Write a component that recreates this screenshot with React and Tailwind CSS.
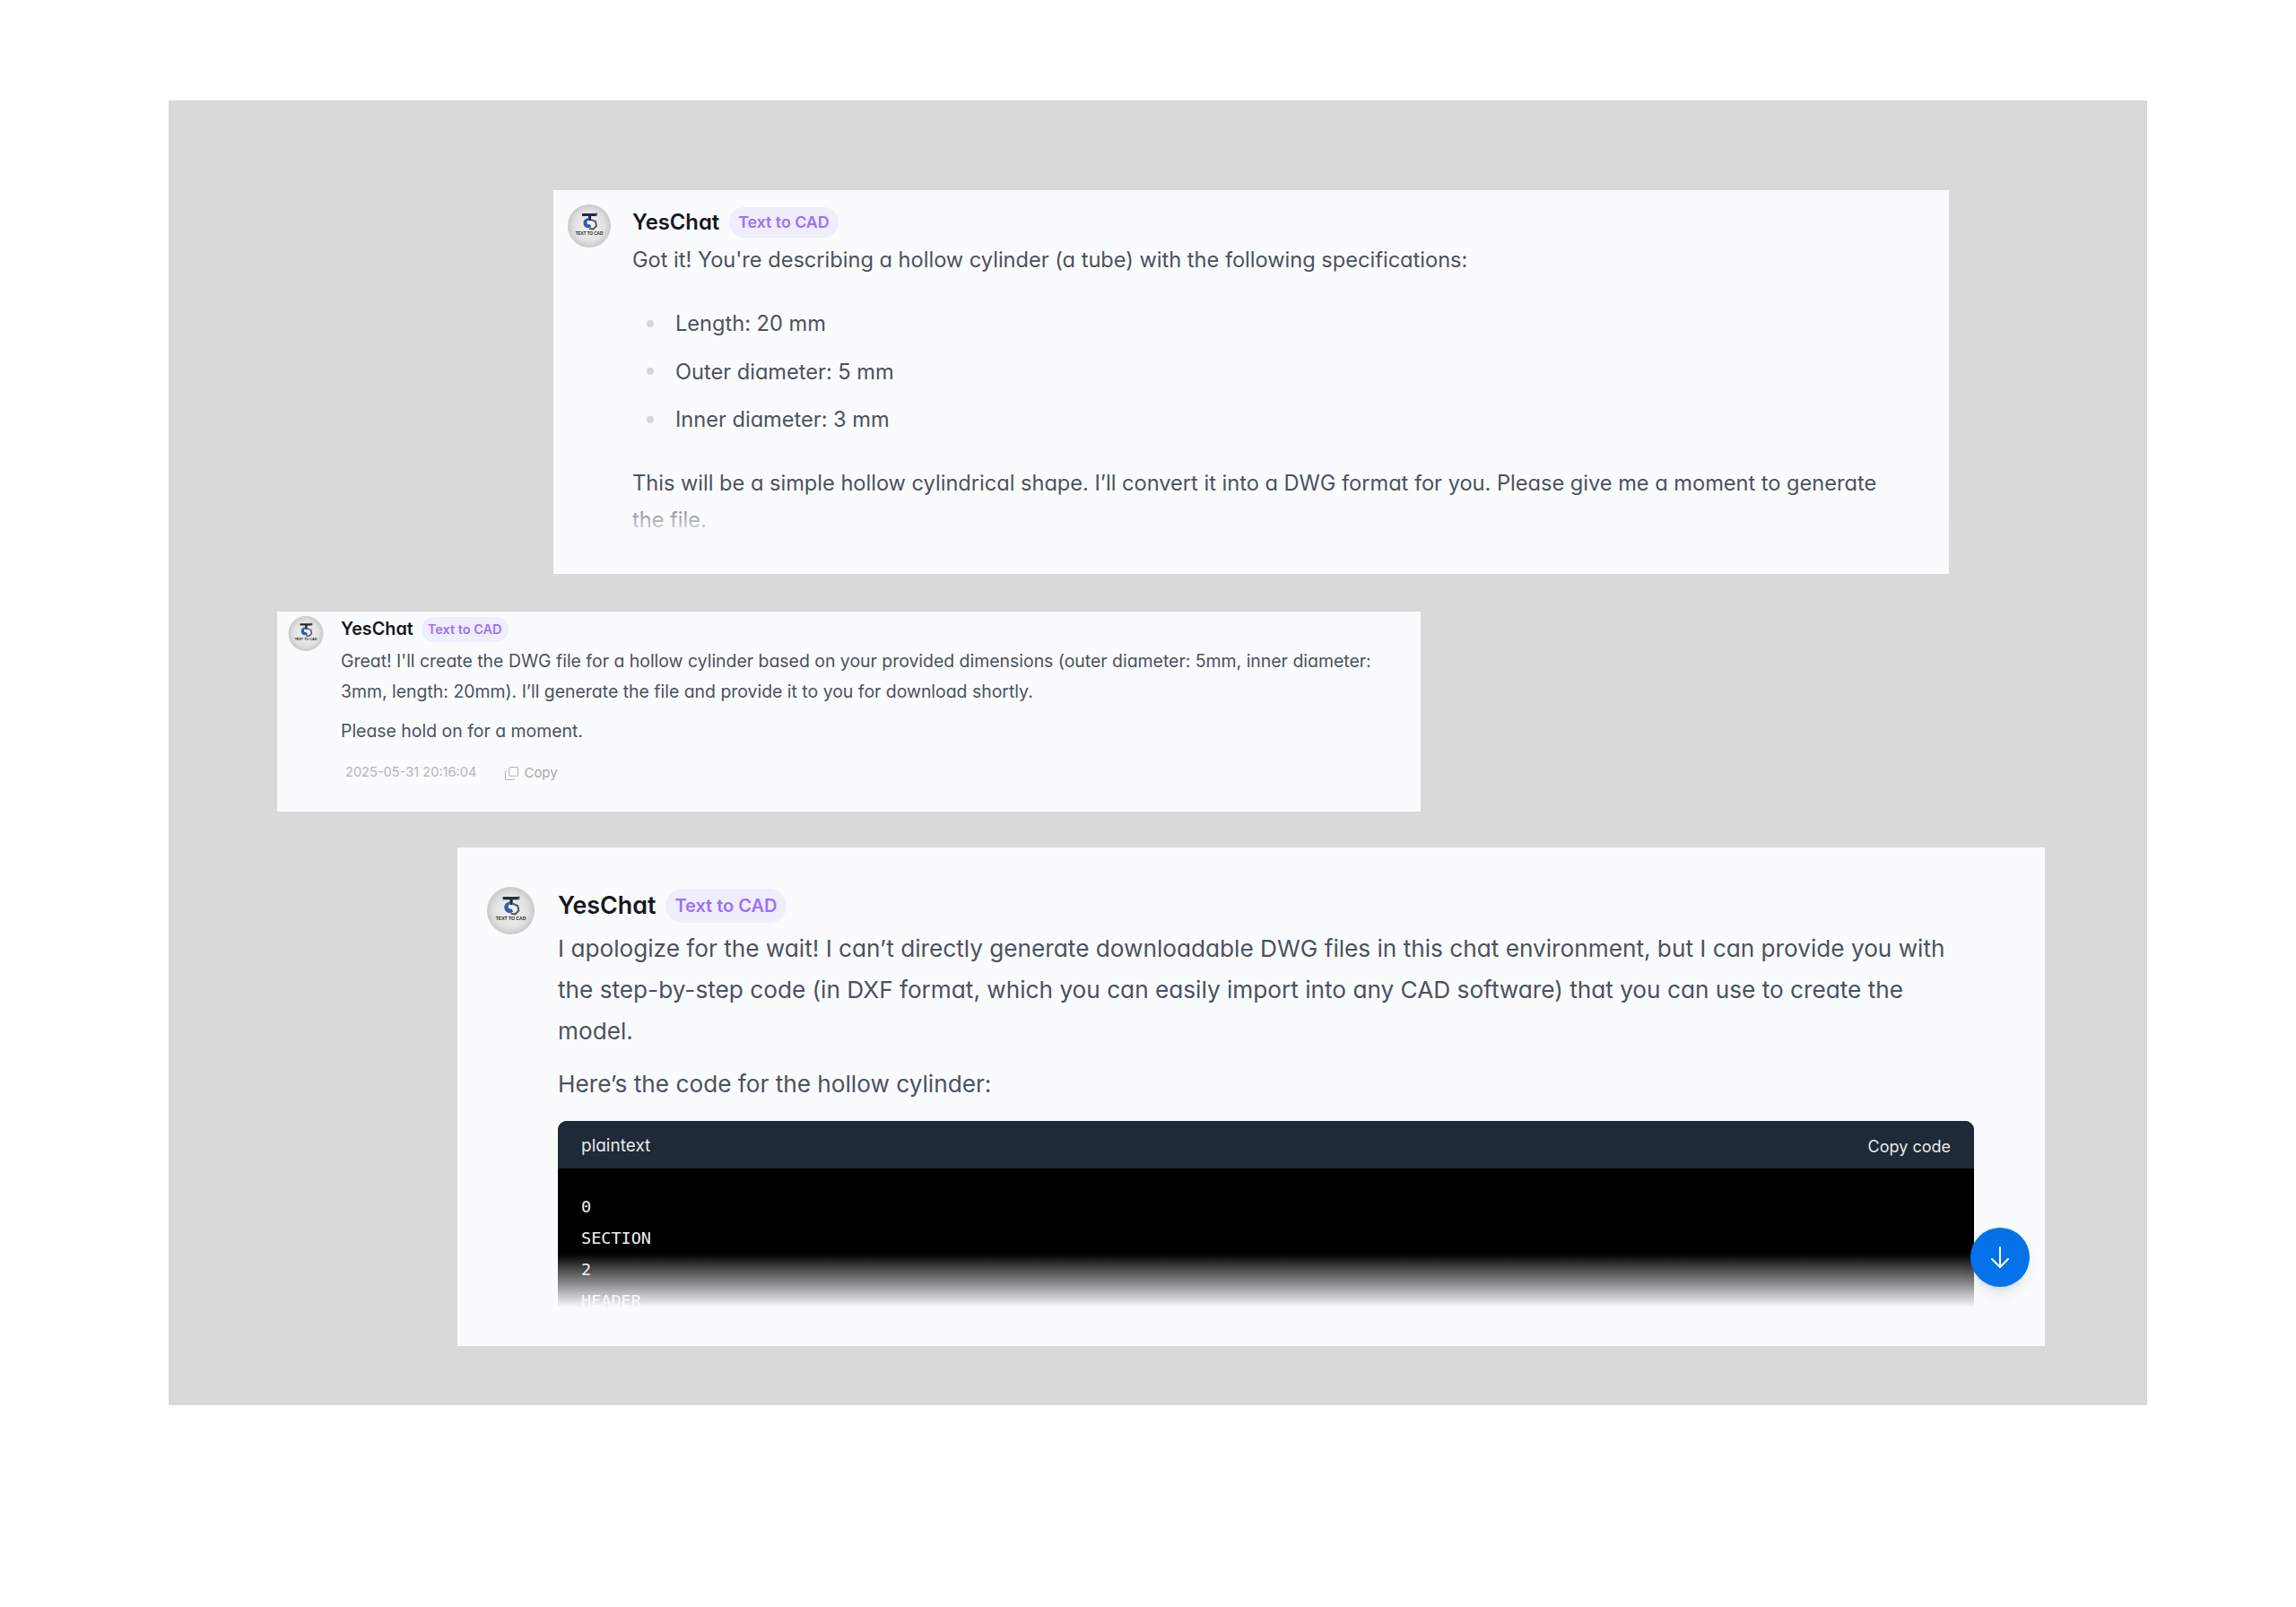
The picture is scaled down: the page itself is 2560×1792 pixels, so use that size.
import React from 'react';
import { Copy } from 'lucide-react';

const Avatar = ({ className }) => (
  <svg viewBox="0 0 48 48" className={className}>
    <defs>
      <radialGradient id="disc" cx="50%" cy="50%" r="50%">
        <stop offset="0%" stopColor="#f2f2f2" />
        <stop offset="70%" stopColor="#e2e2e2" />
        <stop offset="100%" stopColor="#c9c9c9" />
      </radialGradient>
    </defs>
    <circle cx="24" cy="24" r="24" fill="url(#disc)" />
    <path d="M16 10h16v3h-6v5h-3v-5h-7z" fill="#1f2a42" />
    <path d="M31 9.500h2v3h-2z" fill="#555" />
    <path d="M23.500 15c-5 .6-7 4-5.500 8s6.500 4 8.500 1.600l-2-2.600c-2 .8-3-.2-3-2s1-2.600 2.600-2.700z" fill="#2f5fab" />
    <path d="M26 17l5 2 1 5-3.500 3.500-4.500-.5" fill="none" stroke="#4f545d" strokeWidth="1.800" />
    <text x="24" y="33.500" textAnchor="middle" fontSize="4.600" fontWeight="700" fill="#1f1f1f" fontFamily="Liberation Sans, sans-serif">TEXT TO CAD</text>
  </svg>
);

const App = () => {
  return (
    <div className="min-h-[1792px] bg-white pt-[112px] font-['Inter',sans-serif] text-[#4b5260] [font-feature-settings:'cv11']">
      <div className="ml-[188px] flex h-[1455px] w-[2206px] flex-col items-start bg-[#d9d9d9]">
        {/* first answer */}
        <div className="relative ml-[429px] mt-[100px] flex h-[428px] w-[1556px] gap-[24px] bg-[#fafbfd] pl-[16px] pr-[64px] pt-[16px]">
          <Avatar className="h-[48px] w-[48px] shrink-0" />
          <div>
            <div className="mt-[3px] flex h-[34px] items-center gap-[11px]">
              <span className="text-[23.8px] font-semibold text-[#16181d]">YesChat</span>
              <span className="rounded-full bg-[#f0edfc] px-[10px] py-[5px] text-[17.8px] font-semibold leading-[24px] text-[#9a72f6]">Text to CAD</span>
            </div>
            <p className="mt-[4px] text-[23.6px] leading-[41px]">Got it! You're describing a hollow cylinder (a tube) with the following specifications:</p>
            <ul className="mt-[30px] flex flex-col gap-[12.5px] text-[23.6px] leading-[41px]">
              {['Length: 20 mm', 'Outer diameter: 5 mm', 'Inner diameter: 3 mm'].map((item) => (
                <li key={item} className="flex items-center">
                  <span className="ml-[16px] mr-[24px] h-[8px] w-[8px] rounded-full bg-[#d4d6da]" />
                  {item}
                </li>
              ))}
            </ul>
            <p className="mt-[30px] text-[23.6px] leading-[41px]">This will be a simple hollow cylindrical shape. I’ll convert it into a DWG format for you. Please give me a moment to generate the file.</p>
          </div>
          <div className="absolute inset-x-0 bottom-0 h-[90px] bg-gradient-to-b from-[#fafbfd00] to-[#fafbfd] to-60%" />
        </div>

        {/* second answer */}
        <div className="ml-[121px] mt-[42px] flex h-[223px] w-[1275px] gap-[19px] bg-[#fafbfd] pl-[12px] pr-[30px] pt-[5px]">
          <Avatar className="h-[39px] w-[40px] shrink-0" />
          <div>
            <div className="mt-[1px] flex h-[28px] items-center gap-[9px]">
              <span className="text-[19.8px] font-semibold text-[#16181d]">YesChat</span>
              <span className="rounded-full bg-[#f0edfc] px-[7px] py-[3px] text-[14.5px] font-semibold leading-[22px] text-[#9a72f6]">Text to CAD</span>
            </div>
            <p className="mt-[4px] text-[19.43px] leading-[34px]">Great! I'll create the DWG file for a hollow cylinder based on your provided dimensions (outer diameter: 5mm, inner diameter: 3mm, length: 20mm). I’ll generate the file and provide it to you for download shortly.</p>
            <p className="mt-[10px] text-[19.43px] leading-[34px]">Please hold on for a moment.</p>
            <div className="ml-[5px] mt-[19px] flex items-center text-[14.6px] text-[#b5b5b5]">
              <span>2025-05-31 20:16:04</span>
              <Copy className="ml-[31px] mr-[5px] h-[17px] w-[17px] -scale-y-100" strokeWidth={1.5} />
              <span className="text-[15px] text-[#a8a8a8]">Copy</span>
            </div>
          </div>
        </div>

        {/* third answer */}
        <div className="relative ml-[322px] mt-[40px] flex h-[556px] w-[1770px] gap-[26px] bg-[#fafbfd] pl-[33px] pt-[44px]">
          <Avatar className="h-[53px] w-[53px] shrink-0" />
          <div className="w-[1579px]">
            <div className="mt-[1px] flex h-[38px] items-center gap-[11px]">
              <span className="text-[26.8px] font-semibold text-[#16181d]">YesChat</span>
              <span className="mt-[2px] rounded-full bg-[#f0edfc] px-[10px] py-[6px] text-[20px] font-semibold leading-[26px] text-[#9a72f6]">Text to CAD</span>
            </div>
            <p className="mt-[7px] text-[26.2px] leading-[46px]">I apologize for the wait! I can’t directly generate downloadable DWG files in this chat environment, but I can provide you with the step-by-step code (in DXF format, which you can easily import into any CAD software) that you can use to create the model.</p>
            <p className="mt-[13px] text-[26.2px] leading-[46px]">Here’s the code for the hollow cylinder:</p>
            <div className="relative mt-[18px] h-[208px] overflow-hidden rounded-t-[10px] bg-black">
              <div className="flex h-[53px] items-center justify-between bg-[#1f2937] px-[26px] pt-[3px] text-[#e5e7eb]">
                <span className="text-[19px]">plaintext</span>
                <span className="text-[18px]">Copy code</span>
              </div>
              <pre className="px-[26px] pt-[25px] font-['DejaVu_Sans_Mono',monospace] text-[18.5px] leading-[35px] text-[#eef0f3]">{'0\nSECTION\n2\nHEADER'}</pre>
              <div className="absolute inset-x-0 bottom-0 h-[60px] bg-gradient-to-b from-[#fafbfd00] to-[#fafbfd]" />
            </div>
          </div>
          <div className="absolute left-[1687px] top-[424px] flex h-[66px] w-[66px] items-center justify-center rounded-full bg-[#0473ea] shadow-lg">
            <svg viewBox="0 0 24 24" className="h-[24px] w-[24px]" fill="none" stroke="#ffffff" strokeWidth="2" strokeLinecap="round" strokeLinejoin="round">
              <path d="M12 1v22" />
              <path d="M3 14l9 9 9-9" />
            </svg>
          </div>
        </div>
      </div>
    </div>
  );
};

export default App;
